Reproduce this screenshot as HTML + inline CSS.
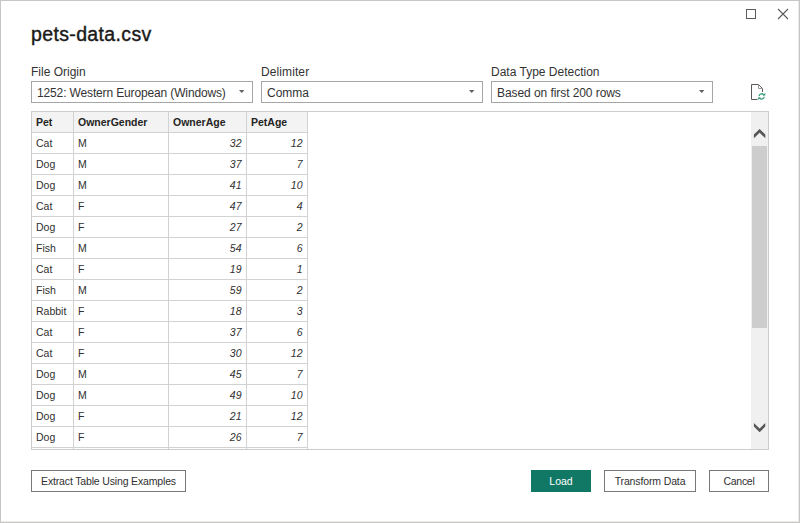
<!DOCTYPE html>
<html lang="en">
<head>
<meta charset="utf-8">
<title>pets-data.csv</title>
<style>
html,body{margin:0;padding:0;}
body{width:800px;height:523px;overflow:hidden;background:#fff;font-family:"Liberation Sans",sans-serif;color:#252423;position:relative;}
.win{position:absolute;left:0;top:0;width:800px;height:523px;background:#fff;}
.frame{position:absolute;left:0;top:0;width:800px;height:523px;box-sizing:border-box;border:1px solid #c8c6c4;box-shadow:inset -1px -1px 0 #ecebea;pointer-events:none;}
.abs{position:absolute;white-space:nowrap;}
.title{left:31px;top:20px;font-size:19.5px;line-height:28px;letter-spacing:0.36px;color:#1b1a19;-webkit-text-stroke:0.4px #1b1a19;}
.lbl{font-size:12px;line-height:16px;color:#333;top:64px;}
.dd{box-sizing:border-box;height:22px;width:222px;top:81px;border:1px solid #a6a6a6;background:#fff;font-size:12px;line-height:20px;padding-left:5px;padding-top:1px;color:#333;}
.dd svg{position:absolute;right:7px;top:8px;}
.grid{left:31px;top:111px;width:738px;height:339px;box-sizing:border-box;border:1px solid #cccccc;background:#fff;overflow:hidden;}
.r{display:flex;height:21px;}
.r div{box-sizing:border-box;height:21px;border-right:1px solid #d2d2d2;border-bottom:1px solid #d2d2d2;padding:0 4px 0 4px;white-space:nowrap;overflow:hidden;font-size:10.5px;line-height:20px;color:#303030;}
.r div:nth-child(1){width:42px;}
.r div:nth-child(2){width:95px;}
.r div:nth-child(3){width:78px;text-align:right;font-style:italic;padding-right:4.5px;}
.r div:nth-child(4){width:61px;text-align:right;font-style:italic;padding-right:4.5px;}
.r.h div{background:#f3f3f3;font-weight:bold;font-style:normal;text-align:left;padding-right:4px;color:#252423;}
.sb{left:719px;top:0;width:17px;height:337px;background:#f0f0f0;}
.thumb{left:1px;top:34px;width:15px;height:182px;background:#cdcdcd;}
.btn{box-sizing:border-box;height:22px;top:470px;border:1px solid #787878;background:#fff;font-size:10.5px;line-height:20px;text-align:center;color:#303030;}
.btn.p{background:#117865;border-color:#117865;color:#fff;}
</style>
</head>
<body>
<div class="win">
  <div class="abs title">pets-data.csv</div>

  <svg class="abs" style="left:745px;top:8px" width="12" height="12" viewBox="0 0 12 12"><rect x="1.5" y="1.5" width="9" height="9" fill="none" stroke="#5a5a5a" stroke-width="1"/></svg>
  <svg class="abs" style="left:777px;top:8px" width="12" height="12" viewBox="0 0 12 12"><path d="M1 1 L11 11 M11 1 L1 11" fill="none" stroke="#5a5a5a" stroke-width="1.1"/></svg>

  <div class="abs lbl" style="left:31px">File Origin</div>
  <div class="abs lbl" style="left:261px;letter-spacing:0.1px">Delimiter</div>
  <div class="abs lbl" style="left:491px">Data Type Detection</div>

  <div class="abs dd" style="left:31px;letter-spacing:-0.14px">1252: Western European (Windows)<svg width="6" height="4" viewBox="0 0 6 4"><polygon points="0,0 5.4,0 2.7,3.1" fill="#606060"/></svg></div>
  <div class="abs dd" style="left:261px">Comma<svg width="6" height="4" viewBox="0 0 6 4"><polygon points="0,0 5.4,0 2.7,3.1" fill="#606060"/></svg></div>
  <div class="abs dd" style="left:491px;letter-spacing:-0.07px">Based on first 200 rows<svg width="6" height="4" viewBox="0 0 6 4"><polygon points="0,0 5.4,0 2.7,3.1" fill="#606060"/></svg></div>

  <svg class="abs" style="left:749px;top:82px" width="18" height="20" viewBox="0 0 18 20">
    <path d="M8.5 17.5 H2.5 V2.5 H9.5 L13.5 6.5 V10" fill="none" stroke="#5a5a5a" stroke-width="1"/>
    <path d="M9.5 2.5 V6.5 H13.5" fill="none" stroke="#9a9a9a" stroke-width="1"/>
    <path d="M10 14.1 A2.6 2.6 0 0 1 14.9 13.2 M15.2 14.7 A2.6 2.6 0 0 1 10.3 15.6" fill="none" stroke="#3a9c7c" stroke-width="1.3"/>
    <path d="M16.3 10.7 V13.4 H13.6 Z M8.9 18.1 V15.4 H11.6 Z" fill="#3a9c7c"/>
  </svg>

  <div class="abs grid">
      <div class="r h"><div>Pet</div><div>OwnerGender</div><div>OwnerAge</div><div>PetAge</div></div>
      <div class="r"><div>Cat</div><div>M</div><div>32</div><div>12</div></div>
      <div class="r"><div>Dog</div><div>M</div><div>37</div><div>7</div></div>
      <div class="r"><div>Dog</div><div>M</div><div>41</div><div>10</div></div>
      <div class="r"><div>Cat</div><div>F</div><div>47</div><div>4</div></div>
      <div class="r"><div>Dog</div><div>F</div><div>27</div><div>2</div></div>
      <div class="r"><div>Fish</div><div>M</div><div>54</div><div>6</div></div>
      <div class="r"><div>Cat</div><div>F</div><div>19</div><div>1</div></div>
      <div class="r"><div>Fish</div><div>M</div><div>59</div><div>2</div></div>
      <div class="r"><div>Rabbit</div><div>F</div><div>18</div><div>3</div></div>
      <div class="r"><div>Cat</div><div>F</div><div>37</div><div>6</div></div>
      <div class="r"><div>Cat</div><div>F</div><div>30</div><div>12</div></div>
      <div class="r"><div>Dog</div><div>M</div><div>45</div><div>7</div></div>
      <div class="r"><div>Dog</div><div>M</div><div>49</div><div>10</div></div>
      <div class="r"><div>Dog</div><div>F</div><div>21</div><div>12</div></div>
      <div class="r"><div>Dog</div><div>F</div><div>26</div><div>7</div></div>
      <div class="r"><div></div><div></div><div></div><div></div></div>
    <div class="abs sb">
      <svg class="abs" style="left:0;top:0" width="16" height="337" viewBox="0 0 16 337">
        <polygon points="2.9,26.2 2.9,22.6 8.6,17 14.3,22.6 14.3,26.2 8.6,20.8" fill="#565656"/>
        <polygon points="2.9,310.9 8.6,316.4 14.3,310.9 14.3,314.6 8.6,320.2 2.9,314.6" fill="#565656"/>
      </svg>
      <div class="abs thumb"></div>
    </div>
  </div>

  <div class="abs btn" style="left:31px;width:155px;letter-spacing:-0.16px">Extract Table Using Examples</div>
  <div class="abs btn p" style="left:531px;width:60px">Load</div>
  <div class="abs btn" style="left:604px;width:92px;letter-spacing:-0.13px">Transform Data</div>
  <div class="abs btn" style="left:709px;width:60px;letter-spacing:-0.3px">Cancel</div>
  <div class="frame"></div>
</div>
</body>
</html>
